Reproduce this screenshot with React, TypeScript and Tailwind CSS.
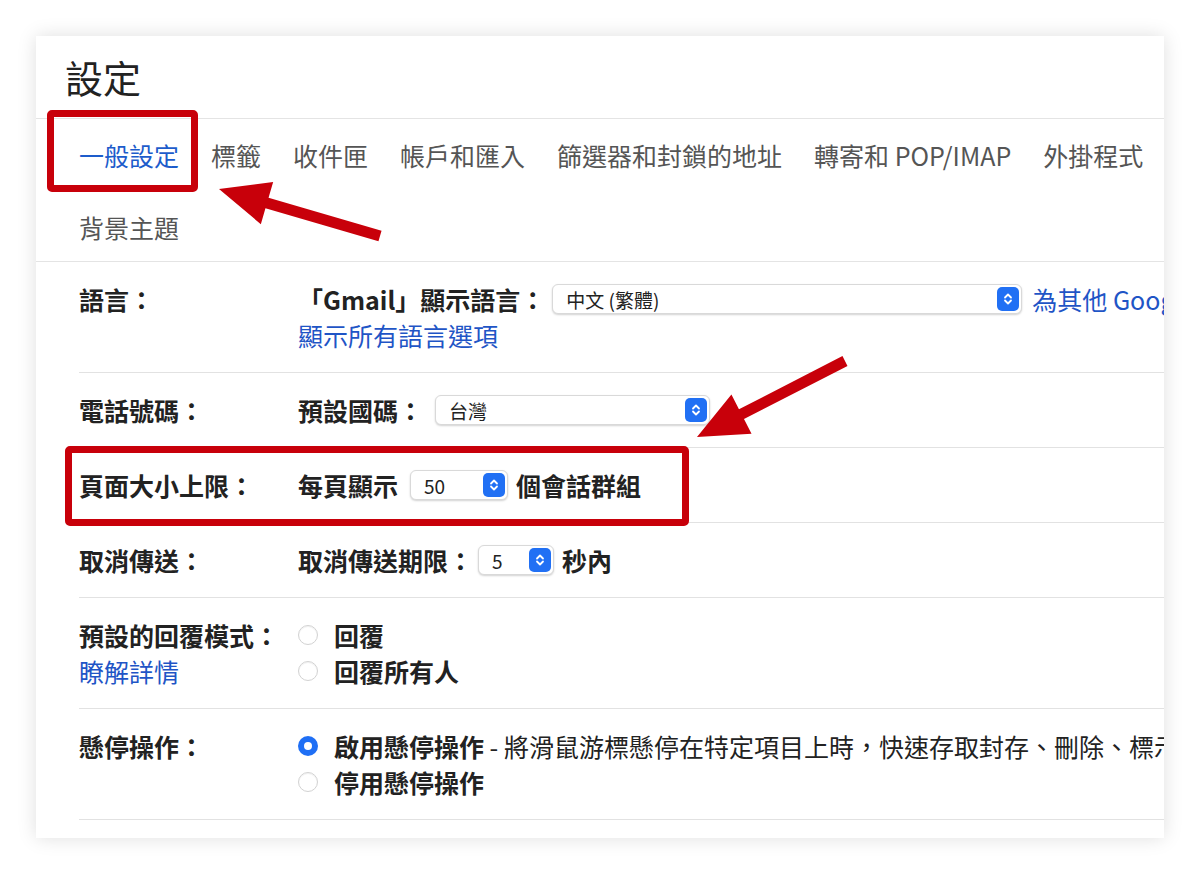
import React from 'react';

const FONT = '"Noto Sans CJK TC", "Noto Sans", "Liberation Sans", sans-serif';

function Stepper() {
    return (
        <div className="flex h-[24px] w-[22px] items-center justify-center rounded-[5px] bg-[#2170f4]">
            <svg width="12" height="16" viewBox="0 0 12 16" fill="none">
                <path d="M3 6.5 L6 3.5 L9 6.5" stroke="white" strokeWidth="1.8" strokeLinecap="round" strokeLinejoin="round" />
                <path d="M3 9.5 L6 12.5 L9 9.5" stroke="white" strokeWidth="1.8" strokeLinecap="round" strokeLinejoin="round" />
            </svg>
        </div>
    );
}

function Select({ value, width }: { value: string; width: string }) {
    return (
        <div
            className={`flex h-[30px] shrink-0 items-center rounded-[6px] border border-[#d9d9d9] bg-white pl-[13px] pr-[2px] shadow-[0_1px_2px_rgba(0,0,0,0.18)] ${width}`}
        >
            <span className="flex-1 text-[19px] leading-none text-[#222]">{value}</span>
            <Stepper />
        </div>
    );
}

function Radio({ checked }: { checked?: boolean }) {
    if (checked) {
        return (
            <span className="flex h-[20px] w-[20px] shrink-0 items-center justify-center rounded-full bg-[#1f6ff5]">
                <span className="h-[8px] w-[8px] rounded-full bg-white" />
            </span>
        );
    }
    return <span className="h-[20px] w-[20px] shrink-0 rounded-full border-[1.5px] border-[#d2d2d2] bg-white shadow-[inset_0_1px_1px_rgba(0,0,0,0.06)]" />;
}

function Row({ label, sub, children }: { label: string; sub?: string; children: React.ReactNode }) {
    return (
        <div className="flex border-b border-[#e2e2e2] py-[19px]">
            <div className="w-[219px] shrink-0">
                <div className="font-semibold text-[#222]">{label}</div>
                {sub && <div className="text-[#1f55c6]">{sub}</div>}
            </div>
            <div className="min-w-0 flex-1 whitespace-nowrap">{children}</div>
        </div>
    );
}

// polygon for a thick arrow from tail to tip
function arrowPoints(tx: number, ty: number, px: number, py: number) {
    const headLen = 50;
    const headHalf = 22;
    const shaft = 5.5;
    const dx = px - tx;
    const dy = py - ty;
    const len = Math.hypot(dx, dy);
    const ux = dx / len;
    const uy = dy / len;
    const nx = -uy;
    const ny = ux;
    const bx = px - ux * headLen;
    const by = py - uy * headLen;
    const pts = [
        [tx + nx * shaft, ty + ny * shaft],
        [bx + nx * shaft, by + ny * shaft],
        [bx + nx * headHalf, by + ny * headHalf],
        [px, py],
        [bx - nx * headHalf, by - ny * headHalf],
        [bx - nx * shaft, by - ny * shaft],
        [tx - nx * shaft, ty - ny * shaft],
    ];
    return pts.map((p) => p.join(',')).join(' ');
}

export default function App() {
    const tabs = ['標籤', '收件匣', '帳戶和匯入', '篩選器和封鎖的地址', '轉寄和 POP/IMAP', '外掛程式'];

    return (
        <div className="relative h-[875px] w-[1200px] overflow-hidden bg-white pl-[36px] pt-[36px]" style={{ fontFamily: FONT }}>
            <div className="h-[802px] w-[1128px] overflow-hidden bg-white text-[25px] leading-[36px] shadow-[0_0_18px_rgba(0,0,0,0.13)]">
                {/* Title */}
                <div className="flex h-[83px] items-center border-b border-[#e4e4e4] pl-[29px] text-[38px] text-[#222]">
                    設定
                </div>

                {/* Tabs */}
                <div className="border-b border-[#e4e4e4] pb-[16px] pl-[43px] pt-[18px] text-[#555]">
                    <div className="flex h-[36px] gap-[32px] whitespace-nowrap">
                        <span className="text-[#1d5ccb]">一般設定</span>
                        {tabs.map((t) => (
                            <span key={t}>{t}</span>
                        ))}
                    </div>
                    <div className="mt-[36px] h-[36px]">背景主題</div>
                </div>

                {/* Settings */}
                <div className="pl-[43px]">
                    <Row label="語言：">
                        <div className="flex items-center">
                            <span className="mr-[7px] font-bold text-[#222]">「Gmail」顯示語言：</span>
                            <Select value="中文 (繁體)" width="w-[470px]" />
                            <span className="ml-[10px] text-[#1f55c6]">為其他 Google 產品變更語言設定</span>
                        </div>
                        <div className="text-[#1f55c6]">顯示所有語言選項</div>
                    </Row>
                    <Row label="電話號碼：">
                        <div className="flex items-center">
                            <span className="mr-[12px] font-bold text-[#222]">預設國碼：</span>
                            <Select value="台灣" width="w-[275px]" />
                        </div>
                    </Row>
                    <Row label="頁面大小上限：">
                        <div className="flex items-center">
                            <span className="mr-[12px] font-bold text-[#222]">每頁顯示</span>
                            <Select value="50" width="w-[98px]" />
                            <span className="ml-[8px] font-bold text-[#222]">個會話群組</span>
                        </div>
                    </Row>
                    <Row label="取消傳送：">
                        <div className="flex items-center">
                            <span className="mr-[5px] font-bold text-[#222]">取消傳送期限：</span>
                            <Select value="5" width="w-[76px]" />
                            <span className="ml-[8px] font-bold text-[#222]">秒內</span>
                        </div>
                    </Row>
                    <Row label="預設的回覆模式：" sub="瞭解詳情">
                        <div className="flex items-center gap-[16px]">
                            <Radio />
                            <span className="font-bold text-[#222]">回覆</span>
                        </div>
                        <div className="flex items-center gap-[16px]">
                            <Radio />
                            <span className="font-bold text-[#222]">回覆所有人</span>
                        </div>
                    </Row>
                    <Row label="懸停操作：">
                        <div className="flex items-center gap-[16px]">
                            <Radio checked />
                            <span className="text-[#222]">
                                <span className="font-bold">啟用懸停操作</span> - 將滑鼠游標懸停在特定項目上時，快速存取封存、刪除、標示為已讀取和延後等控制項。
                            </span>
                        </div>
                        <div className="flex items-center gap-[16px]">
                            <Radio />
                            <span className="font-bold text-[#222]">停用懸停操作</span>
                        </div>
                    </Row>
                </div>
            </div>

            {/* Annotations */}
            <div className="pointer-events-none absolute left-[47px] top-[110px] h-[82px] w-[151px] rounded-[5px] border-[7px] border-[#c8000a]" />
            <div className="pointer-events-none absolute left-[65px] top-[446px] h-[80px] w-[624px] rounded-[5px] border-[7px] border-[#c8000a]" />
            <svg className="pointer-events-none absolute left-0 top-0" width="1200" height="875">
                <polygon points={arrowPoints(380, 236, 219, 189)} fill="#c8000a" strokeLinejoin="round" />
                <polygon points={arrowPoints(845, 361, 697, 437)} fill="#c8000a" strokeLinejoin="round" />
            </svg>
        </div>
    );
}
